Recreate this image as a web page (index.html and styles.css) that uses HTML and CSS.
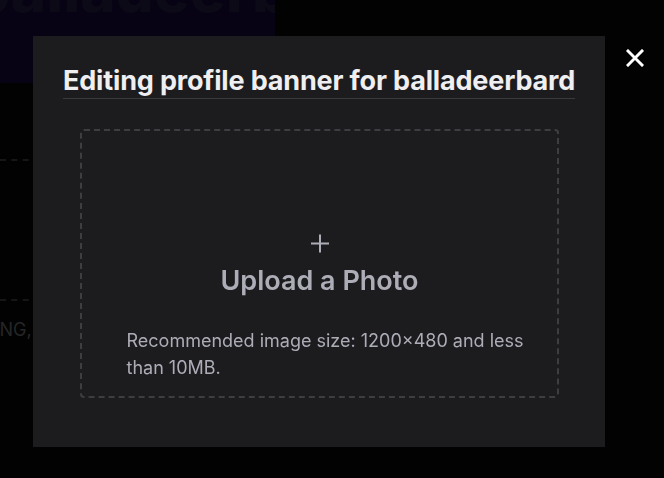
FILE: index.html
```html
<!DOCTYPE html>
<html lang="en">
<head>
<meta charset="utf-8">
<title>Edit profile banner</title>
<link rel="stylesheet" href="styles.css">
</head>
<body>
<div class="page">
  <div class="banner"><span class="banner-name">balladeerbard</span></div>
  <div class="rule rule-top"></div>
  <div class="rule rule-bottom"></div>
  <p class="page-note">PNG, GIF</p>
</div>
<div class="overlay">
  <div class="modal">
    <h2 class="modal-title">Editing profile banner for balladeerbard</h2>
    <div class="dropzone">
      <svg class="plus" width="18" height="19" viewBox="0 0 18 19" aria-hidden="true">
        <path d="M9 0.5v18M0 9.5h18" stroke="#adadb8" stroke-width="2" fill="none"/>
      </svg>
      <div class="upload-label">Upload a Photo</div>
      <p class="hint">Recommended image size: 1200×480 and less than 10MB.</p>
    </div>
  </div>
  <button class="close" aria-label="Close">
    <svg width="18" height="18" viewBox="0 0 18 18" aria-hidden="true">
      <path d="M2 2L16 16M16 2L2 16" stroke="#ffffff" stroke-width="3" fill="none" stroke-linecap="square"/>
    </svg>
  </button>
</div>
</body>
</html>
```
FILE: styles.css
```css
html, body {
  margin: 0;
  padding: 0;
  background: #000;
  font-family: Inter, "Noto Sans", sans-serif;
  overflow: hidden;
}

.page {
  width: 664px;
  height: 478px;
  background: #020202;
  display: flex;
  flex-direction: column;
}

.banner {
  width: 275px;
  height: 83px;
  background: #070314;
  overflow: hidden;
}

.banner-name {
  display: block;
  font-size: 60px;
  font-weight: 800;
  color: #0c0a16;
  line-height: 1;
  margin-top: -40px;
  margin-left: -28px;
  white-space: nowrap;
}

.rule {
  border-top: 2px dashed #161616;
  width: 40px;
}

.rule-top { margin-top: 76px; }
.rule-bottom { margin-top: 138px; }

.page-note {
  margin: 18px 0 0 -12px;
  font-size: 18px;
  line-height: 22px;
  color: #262626;
}

.overlay {
  position: fixed;
  inset: 0;
  display: flex;
  align-items: flex-start;
  padding: 36px 0 0 33px;
}

.modal {
  width: 572px;
  height: 411px;
  box-sizing: border-box;
  background: #1c1c1f;
  padding: 29px 30px 0;
  display: flex;
  flex-direction: column;
  align-items: flex-start;
}

.modal-title {
  margin: 0;
  font-size: 27px;
  font-weight: 700;
  color: #efeff1;
  line-height: 32px;
  padding-bottom: 1px;
  border-bottom: 1px solid #3a3a3d;
  letter-spacing: -0.16px;
  white-space: nowrap;
}

.dropzone {
  align-self: center;
  margin-top: 30px;
  width: 479px;
  height: 269px;
  box-sizing: border-box;
  border: 2px dashed #3d3d42;
  border-radius: 4px;
  display: flex;
  flex-direction: column;
  align-items: center;
  padding: 103px 28px 0 45px;
  color: #adadb8;
}

.plus {
  display: block;
  margin-left: -16px;
}

.upload-label {
  margin-top: 12px;
  margin-left: -16px;
  font-size: 27px;
  font-weight: 600;
  line-height: 32px;
}

.hint {
  margin: 30px 0 0;
  font-size: 18px;
  line-height: 27px;
  align-self: stretch;
}

.close {
  margin: 13px 0 0 21px;
  padding: 0;
  border: 0;
  background: none;
  width: 18px;
  height: 18px;
  display: flex;
}
```
